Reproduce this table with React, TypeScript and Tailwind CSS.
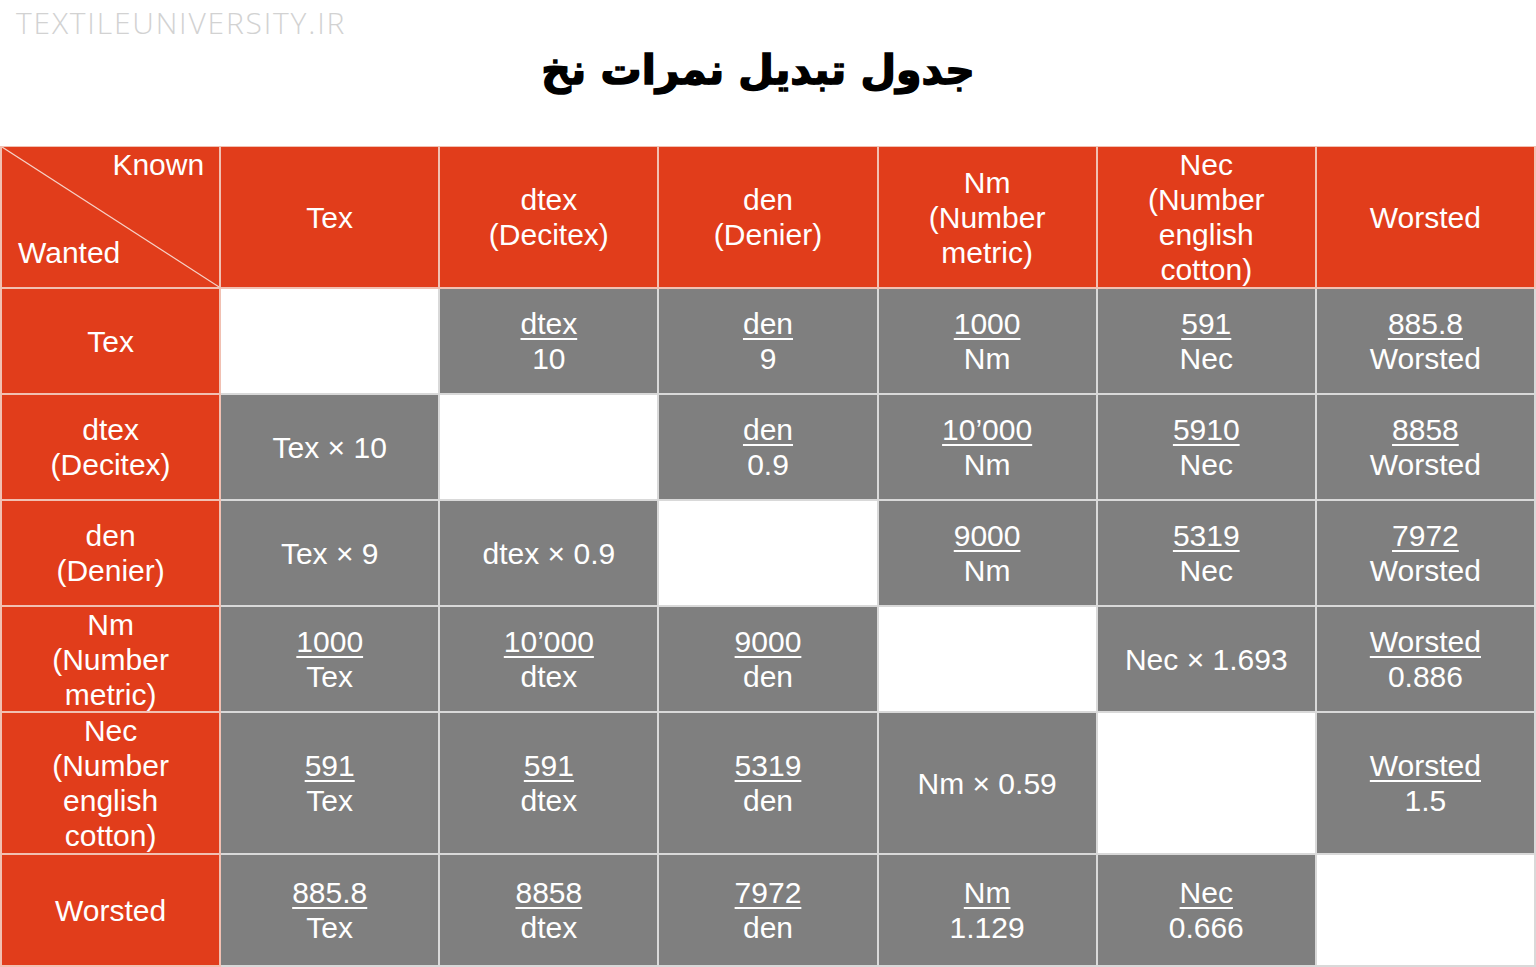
import React from "react";

type Cell =
  | { k: "empty" }
  | { k: "frac"; n: string; d: string }
  | { k: "text"; t: string };

const E: Cell = { k: "empty" };
const F = (n: string, d: string): Cell => ({ k: "frac", n, d });
const T = (t: string): Cell => ({ k: "text", t });

const header: string[][] = [
  ["Tex"],
  ["dtex", "(Decitex)"],
  ["den", "(Denier)"],
  ["Nm", "(Number", "metric)"],
  ["Nec", "(Number", "english", "cotton)"],
  ["Worsted"],
];

const rows: { label: string[]; cells: Cell[] }[] = [
  {
    label: ["Tex"],
    cells: [E, F("dtex", "10"), F("den", "9"), F("1000", "Nm"), F("591", "Nec"), F("885.8", "Worsted")],
  },
  {
    label: ["dtex", "(Decitex)"],
    cells: [T("Tex × 10"), E, F("den", "0.9"), F("10’000", "Nm"), F("5910", "Nec"), F("8858", "Worsted")],
  },
  {
    label: ["den", "(Denier)"],
    cells: [T("Tex × 9"), T("dtex × 0.9"), E, F("9000", "Nm"), F("5319", "Nec"), F("7972", "Worsted")],
  },
  {
    label: ["Nm", "(Number", "metric)"],
    cells: [F("1000", "Tex"), F("10’000", "dtex"), F("9000", "den"), E, T("Nec × 1.693"), F("Worsted", "0.886")],
  },
  {
    label: ["Nec", "(Number", "english", "cotton)"],
    cells: [F("591", "Tex"), F("591", "dtex"), F("5319", "den"), T("Nm × 0.59"), E, F("Worsted", "1.5")],
  },
  {
    label: ["Worsted"],
    cells: [F("885.8", "Tex"), F("8858", "dtex"), F("7972", "den"), F("Nm", "1.129"), F("Nec", "0.666"), E],
  },
];

function RedCell({ lines }: { lines: string[] }) {
  return (
    <div className="flex flex-col items-center justify-center bg-[#e13d1b] border-r-2 border-b-2 border-[#f1c0b2] text-white text-center">
      {lines.map((l, i) => (
        <div key={i}>{l}</div>
      ))}
    </div>
  );
}

function BodyCell({ c }: { c: Cell }) {
  if (c.k === "empty") {
    return <div className="bg-white border-r-2 border-b-2 border-[#d9d9d9]" />;
  }
  if (c.k === "text") {
    return (
      <div className="flex items-center justify-center bg-[#7f7f7f] border-r-2 border-b-2 border-[#d9d9d9] text-white">
        {c.t}
      </div>
    );
  }
  return (
    <div className="flex flex-col items-center justify-center bg-[#7f7f7f] border-r-2 border-b-2 border-[#d9d9d9] text-white">
      <div className="underline decoration-2 underline-offset-[4px]">{c.n}</div>
      <div>{c.d}</div>
    </div>
  );
}

export default function App() {
  return (
    <div className="w-[1536px] h-[967px] bg-white overflow-hidden" style={{ fontFamily: '"Liberation Sans", Arial, sans-serif' }}>
      <div className="h-[146px] flex flex-col">
        <div
          className="pt-[5px] pl-4 h-[40px] text-[30px] leading-[36px] font-light text-[#d2d2d2] tracking-[1.8px]"
          style={{ fontFamily: '"Open Sans", sans-serif' }}
        >
          TEXTILEUNIVERSITY.IR
        </div>
        <div
          dir="rtl"
          className="text-center text-[41px] leading-[60px] font-bold text-black pr-[20px] [-webkit-text-stroke:1.5px_black]"
          style={{ fontFamily: '"DejaVu Sans", sans-serif' }}
        >
          جدول تبدیل نمرات نخ
        </div>
      </div>
      <div className="grid grid-cols-7 grid-rows-[142px_106px_106px_106px_106px_142px_112px] border-t border-l-2 border-[#f1c0b2] text-[30px] leading-[35px]">
        <div className="relative bg-[#e13d1b] border-r-2 border-b-2 border-[#f1c0b2] text-white flex flex-col justify-between pt-0 pb-[17px]">
          <svg className="absolute inset-0 w-full h-full" viewBox="0 0 100 100" preserveAspectRatio="none">
            <line x1="0" y1="0" x2="100" y2="100" stroke="#f6d2c8" strokeWidth="1.2" vectorEffect="non-scaling-stroke" />
          </svg>
          <div className="relative text-right pr-[15px]">Known</div>
          <div className="relative text-left pl-4">Wanted</div>
        </div>
        {header.map((h, i) => (
          <RedCell key={i} lines={h} />
        ))}
        {rows.map((r, ri) => (
          <React.Fragment key={ri}>
            <RedCell lines={r.label} />
            {r.cells.map((c, ci) => (
              <BodyCell key={ci} c={c} />
            ))}
          </React.Fragment>
        ))}
      </div>
    </div>
  );
}
